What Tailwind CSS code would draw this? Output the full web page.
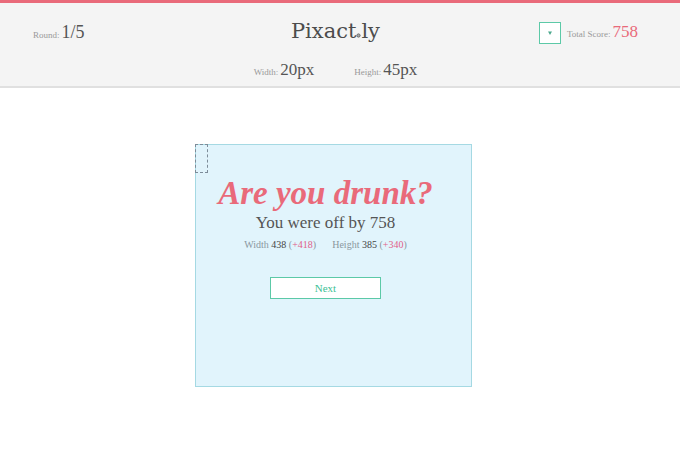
<!DOCTYPE html>
<html lang="en">
<head>
    <meta charset="UTF-8">
    <meta name="viewport" content="width=device-width, initial-scale=1.0">
    <title>Pixact.ly</title>
    <script src="https://cdn.jsdelivr.net/npm/@tailwindcss/browser@4"></script>
</head>
<body class="flex min-h-screen flex-col bg-white font-['Liberation_Serif',serif] text-[#555555]">
    <!-- Header -->
    <header class="border-t-3 border-b-2 border-t-[#e96a7a] border-b-[#e0e0e0] bg-[#f4f4f4] pt-[14px] pr-[42px] pb-[2px] pl-[33px]">
        <div class="grid grid-cols-[1fr_auto_1fr] items-center">
            <p class="flex items-baseline gap-[2px] text-[9px] leading-6 text-[#999999]">
                Round: <span class="text-[18px] text-[#555555]">1/5</span>
            </p>
            <h1 class="pb-1 font-['DejaVu_Serif',serif] text-[21px] leading-7 text-[#4c4c4c]">
                <a href="#">Pixact<svg class="inline-block size-[5px] align-baseline" viewBox="0 0 5 5" aria-hidden="true"><circle cx="2.5" cy="2.5" r="1.6" fill="#aaaaaa" stroke="#666666" stroke-width="1"/></svg>ly</a>
            </h1>
            <div class="flex items-center justify-end gap-[6px]">
                <button class="flex size-[22px] items-center justify-center border border-[#5cc9a7] bg-white" type="button" aria-label="Score details">
                    <svg class="h-1 w-1" viewBox="0 0 4 4" aria-hidden="true"><path d="M0 0.5h4L2 4z" fill="#4aa88c"/></svg>
                </button>
                <p class="flex items-baseline gap-[2px] text-[9px] leading-6 text-[#999999]">
                    Total Score: <span class="text-[17px] text-[#e96a7a]">758</span>
                </p>
            </div>
        </div>

        <!-- Target size -->
        <div class="mt-[9px] flex justify-center gap-10">
            <p class="flex items-baseline gap-[2px] text-[9px] leading-6 text-[#999999]">
                Width: <span class="text-[17px] text-[#555555]">20px</span>
            </p>
            <p class="flex items-baseline gap-[2px] text-[9px] leading-6 text-[#999999]">
                Height: <span class="text-[17px] text-[#555555]">45px</span>
            </p>
        </div>
    </header>

    <!-- Drawing area -->
    <main class="relative flex-1">
        <section class="absolute top-14 left-[195px] h-[243px] w-[277px] border border-[#a5d9e3] bg-[#e1f4fc] pt-7 pr-4 text-center">
            <div class="absolute -top-px -left-px h-[29px] w-[13px] border border-dashed border-[#7d8c99]"></div>

            <h2 class="text-[33px] leading-10 font-bold whitespace-nowrap text-[#e96a7a] italic">Are you drunk?</h2>
            <p class="text-[17px] leading-5">You were off by 758</p>
            <div class="mt-1 flex justify-center gap-4 text-[10px] leading-4 text-[#8a979e]">
                <p>Width <span class="text-[#444444]">438</span> (<span class="text-[#e0608a]">+418</span>)</p>
                <p>Height <span class="text-[#444444]">385</span> (<span class="text-[#e0608a]">+340</span>)</p>
            </div>
            <button class="mt-6 h-[22px] w-[111px] border border-[#5cc9a7] bg-white text-[11px] text-[#3dbf95]" type="button">Next</button>
        </section>
    </main>
</body>
</html>
